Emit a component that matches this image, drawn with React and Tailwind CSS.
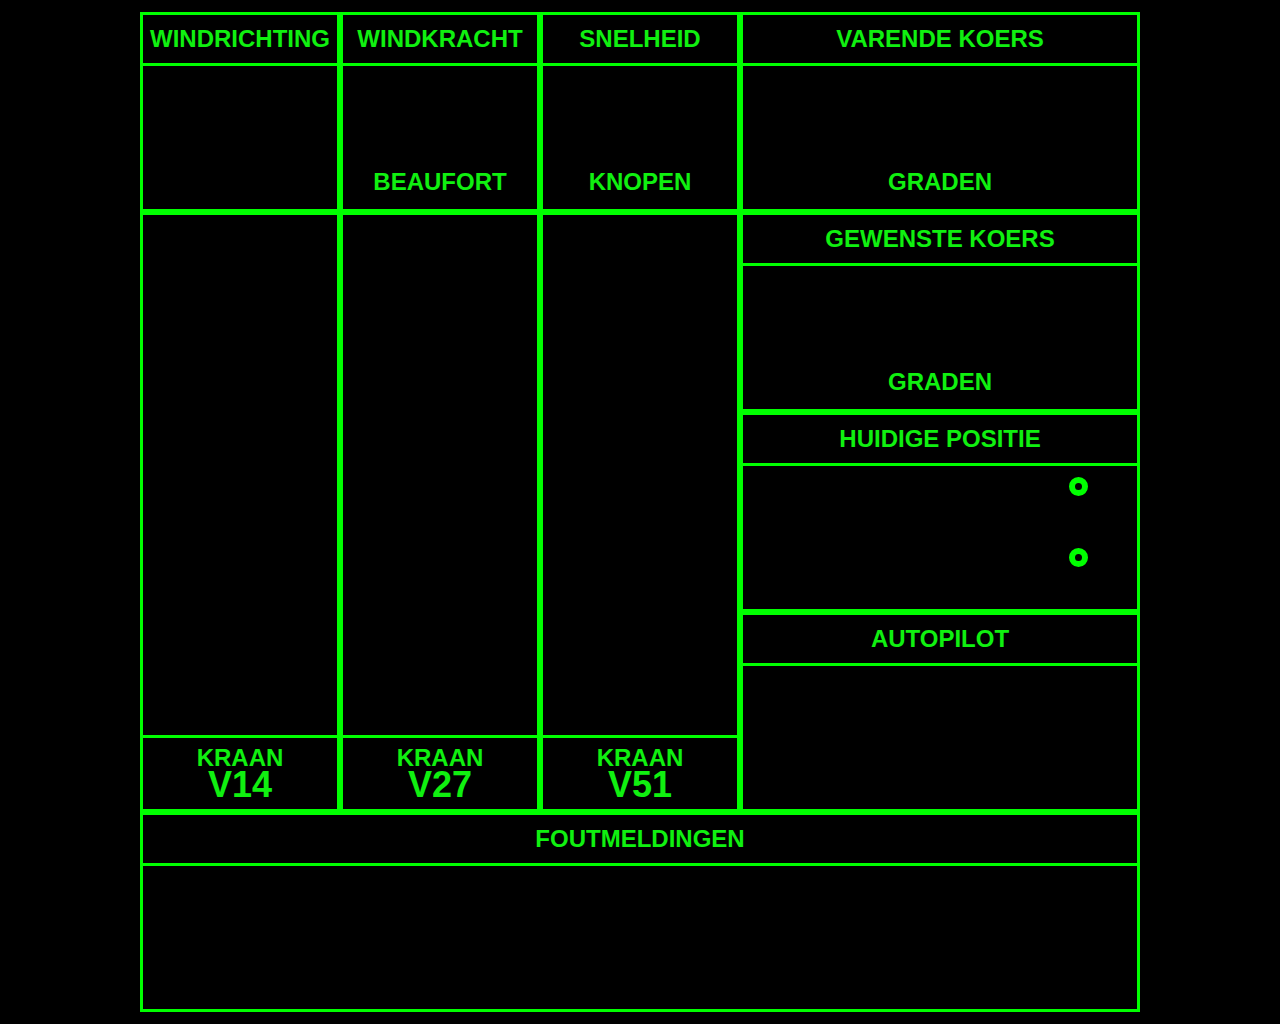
import React from "react";

const G = "border-[#00ff00]";

function Header({ children }) {
  return (
    <div className={`h-[51px] shrink-0 flex items-center justify-center border-b-[3px] ${G} text-[24px] leading-[28px] font-bold`}>
      {children}
    </div>
  );
}

function ValueBox({ title, unit, className = "" }) {
  return (
    <div className={`border-[3px] ${G} flex flex-col ${className}`}>
      <Header>{title}</Header>
      <div className="flex-1 flex flex-col justify-end items-center pb-[13px]">
        <div className="text-[24px] leading-[28px] font-bold">{unit}</div>
      </div>
    </div>
  );
}

function TallBox({ code }) {
  return (
    <div className={`row-span-3 border-[3px] ${G} flex flex-col`}>
      <div className={`flex-1 border-b-[3px] ${G}`}></div>
      <div className="h-[71px] shrink-0 flex flex-col items-center pt-[8px]">
        <div className="text-[24px] leading-[24px] font-bold">KRAAN</div>
        <div className="text-[36px] leading-[30px] font-bold">{code}</div>
      </div>
    </div>
  );
}

function Ring() {
  return <div className={`w-[19px] h-[19px] rounded-full border-[6px] ${G} bg-black`}></div>;
}

export default function App() {
  return (
    <div
      className="min-h-screen w-full bg-black text-[#10f010] pt-[12px] pl-[140px]"
      style={{ fontFamily: '"Liberation Sans", Arial, sans-serif' }}
    >
      <div className="grid grid-cols-[200px_200px_200px_400px] grid-rows-[200px_200px_200px_200px_200px] w-[1000px]">
        <ValueBox title="WINDRICHTING" unit="" />
        <ValueBox title="WINDKRACHT" unit="BEAUFORT" />
        <ValueBox title="SNELHEID" unit="KNOPEN" />
        <ValueBox title="VARENDE KOERS" unit="GRADEN" />

        <TallBox code="V14" />
        <TallBox code="V27" />
        <TallBox code="V51" />
        <ValueBox title="GEWENSTE KOERS" unit="GRADEN" className="col-start-4 row-start-2" />

        <div className={`col-start-4 row-start-3 border-[3px] ${G} flex flex-col`}>
          <Header>HUIDIGE POSITIE</Header>
          <div className="flex-1 flex flex-col items-end pr-[49px] pt-[11px] gap-[52px]">
            <Ring />
            <Ring />
          </div>
        </div>

        <div className={`col-start-4 row-start-4 border-[3px] ${G} flex flex-col`}>
          <Header>AUTOPILOT</Header>
          <div className="flex-1"></div>
        </div>

        <div className={`col-span-4 row-start-5 border-[3px] ${G} flex flex-col`}>
          <Header>FOUTMELDINGEN</Header>
          <div className="flex-1"></div>
        </div>
      </div>
    </div>
  );
}
